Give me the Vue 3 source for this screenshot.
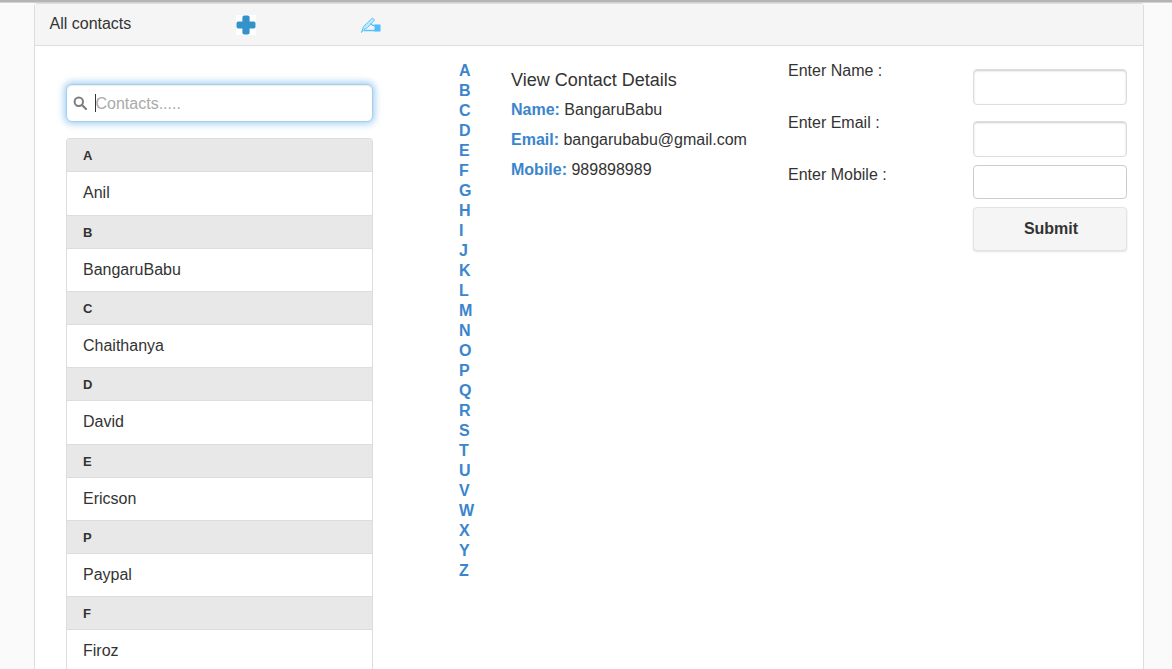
<script setup>
const groups = [
  ['A', 'Anil'], ['B', 'BangaruBabu'], ['C', 'Chaithanya'], ['D', 'David'],
  ['E', 'Ericson'], ['P', 'Paypal'], ['F', 'Firoz']
]
const letters = 'ABCDEFGHIJKLMNOPQRSTUVWXYZ'.split('')
const fields = ['Enter Name :', 'Enter Email :', 'Enter Mobile :']
</script>

<template>
  <div class="page">
    <div class="panel">
      <div class="heading">
        <span class="title">All contacts</span>
        <span class="plus-box">
          <svg width="20" height="20" viewBox="0 0 20 20"><path d="M8.2 0.5h3.6a1.8 1.8 0 0 1 1.8 1.8V6.4h4.1a1.8 1.8 0 0 1 1.8 1.8v3.6a1.8 1.8 0 0 1-1.8 1.8h-4.1v4.1a1.8 1.8 0 0 1-1.8 1.8H8.2a1.8 1.8 0 0 1-1.8-1.8v-4.1H2.3a1.8 1.8 0 0 1-1.8-1.8V8.2a1.8 1.8 0 0 1 1.8-1.8h4.1V2.3a1.8 1.8 0 0 1 1.8-1.8z" fill="#3492cb"/></svg>
        </span>
        <span class="pen-box">
          <svg width="20" height="16" viewBox="0 0 20 16" fill="none"><path d="M0.5 15.5L2.5 9.5 11.5 1 13.5 3 6.5 10.5 3 12.5z" fill="#bfe9fe" stroke="#58c4fb" stroke-width="1"/><path d="M3 13.5H15V8.5H12L9.5 6.5" stroke="#58c4fb" stroke-width="1.3"/><rect x="13.5" y="7.5" width="6" height="7" rx="0.5" fill="#4dbdfb"/></svg>
        </span>
      </div>
      <div class="body">
        <div class="col-list">
          <div class="search">
            <svg class="glass" width="14" height="14" viewBox="0 0 14 14" fill="none"><circle cx="5.8" cy="5.8" r="4.2" stroke="#7d7d7d" stroke-width="2"/><path d="M9 9l4 4" stroke="#7d7d7d" stroke-width="2.2" stroke-linecap="round"/></svg>
            <span class="caret"></span>
            <span class="placeholder">Contacts.....</span>
          </div>
          <div class="list">
            <template v-for="g in groups" :key="g[0]">
              <div class="divider">{{ g[0] }}</div>
              <div class="item">{{ g[1] }}</div>
            </template>
          </div>
        </div>
        <div class="letters">
          <a v-for="l in letters" :key="l" class="letter">{{ l }}</a>
        </div>
        <div class="details">
          <h4 class="details-title">View Contact Details</h4>
          <p class="detail"><b>Name:</b> BangaruBabu</p>
          <p class="detail"><b>Email:</b> bangarubabu@gmail.com</p>
          <p class="detail"><b>Mobile:</b> 989898989</p>
        </div>
        <div class="form">
          <div class="labels">
            <div v-for="f in fields" :key="f" class="label">{{ f }}</div>
          </div>
          <div class="controls">
            <div class="input shadowed first"></div>
            <div class="input shadowed second"></div>
            <div class="input third"></div>
            <button class="submit">Submit</button>
          </div>
        </div>
      </div>
    </div>
  </div>
</template>

<style>
html, body { margin: 0; background: #fafafa; overflow: hidden; }
</style>

<style scoped>
.page {
  height: 669px;
  overflow: hidden;
  box-sizing: border-box;
  padding: 3px 28px 0 34px;
  background: #fafafa;
  font-family: "Liberation Sans", Arial, sans-serif;
  font-size: 16px;
  color: #333;
  position: relative;
}
.page::before {
  content: "";
  display: block;
  height: 3px;
  margin: -3px -28px 0 -34px;
  background: linear-gradient(#b4b4b4, #b4b4b4 2px, #f0f0f0);
}
.panel {
  background: #fff;
  border: 1px solid #ddd;
  border-bottom: 0;
  border-radius: 4px 4px 0 0;
  height: 700px;
  box-sizing: border-box;
}
.heading {
  height: 41px;
  background: #f5f5f5;
  border-bottom: 1px solid #ddd;
  display: flex;
  align-items: center;
  padding-left: 14.5px;
}
.title { width: 186.5px; position: relative; top: -1px; }
.plus-box { width: 20px; height: 20px; background: #fff; margin-top: 1px; display: flex; }
.pen-box { margin-left: 105px; width: 20px; height: 16px; margin-top: 1px; display: flex; }
.body {
  display: flex;
  align-items: flex-start;
}
.col-list {
  width: 307px;
  margin: 38px 0 0 31px;
  flex: none;
}
.search {
  height: 38px;
  box-sizing: border-box;
  border: 1px solid #a5cfef;
  border-radius: 6px;
  background: #fff;
  box-shadow: inset 0 1px 1px rgba(0,0,0,.075), 0 0 7px 2px rgba(102,175,233,.6);
  display: flex;
  align-items: center;
  padding-left: 5px;
}
.glass { flex: none; margin-left: 1px; }
.caret { width: 1px; height: 18px; background: #333; margin-left: 8px; }
.placeholder { color: #aaa; position: relative; top: 1px; left: -0.5px; }
.list {
  margin-top: 16.4px;
  border: 1px solid #ddd;
  border-bottom: 0;
  border-radius: 4px 4px 0 0;
  overflow: hidden;
}
.divider {
  height: 33px;
  line-height: 33px;
  box-sizing: border-box;
  background: #e8e8e8;
  border-bottom: 1px solid #ddd;
  padding-left: 16px;
  font-size: 13px;
  font-weight: bold;
}
.item {
  height: 43.33px;
  line-height: 41px;
  box-sizing: border-box;
  padding-left: 16px;
  border-bottom: 1px solid #ddd;
  background: #fff;
}
.letters {
  margin: 15px 0 0 86px;
  width: 52px;
  flex: none;
  display: flex;
  flex-direction: column;
}
.letter {
  height: 20px;
  line-height: 20px;
  font-weight: bold;
  color: #3a85cb;
}
.details { width: 277px; flex: none; padding-top: 24px; }
.details-title {
  margin: 0 0 10px;
  font-size: 18px;
  font-weight: normal;
  line-height: 20px;
  position: relative;
  top: -0.5px;
}
.detail { margin: 0 0 10px; line-height: 20px; }
.detail b { color: #3a85cb; }
.form { display: flex; flex: none; }
.labels { width: 185px; padding-top: 14px; }
.label { height: 52px; line-height: 22px; }
.controls { width: 154px; padding-top: 23px; }
.input {
  height: 36px;
  box-sizing: border-box;
  border: 1px solid #ccc;
  border-radius: 4px;
  background: #fff;
}
.shadowed { border-color: #ddd; box-shadow: inset 0 1px 2px rgba(0,0,0,.2); }
.first { margin-bottom: 16px; }
.second { margin-bottom: 8px; }
.third { height: 34px; margin-bottom: 8px; }
.submit {
  display: block;
  width: 154px;
  height: 44px;
  padding: 0 0 0 2px;
  border: 1px solid #e3e3e3;
  border-radius: 4px;
  background: #f5f5f5;
  box-shadow: 0 1px 2px rgba(0,0,0,.12);
  font: bold 16px "Liberation Sans", Arial, sans-serif;
  color: #333;
}
</style>
